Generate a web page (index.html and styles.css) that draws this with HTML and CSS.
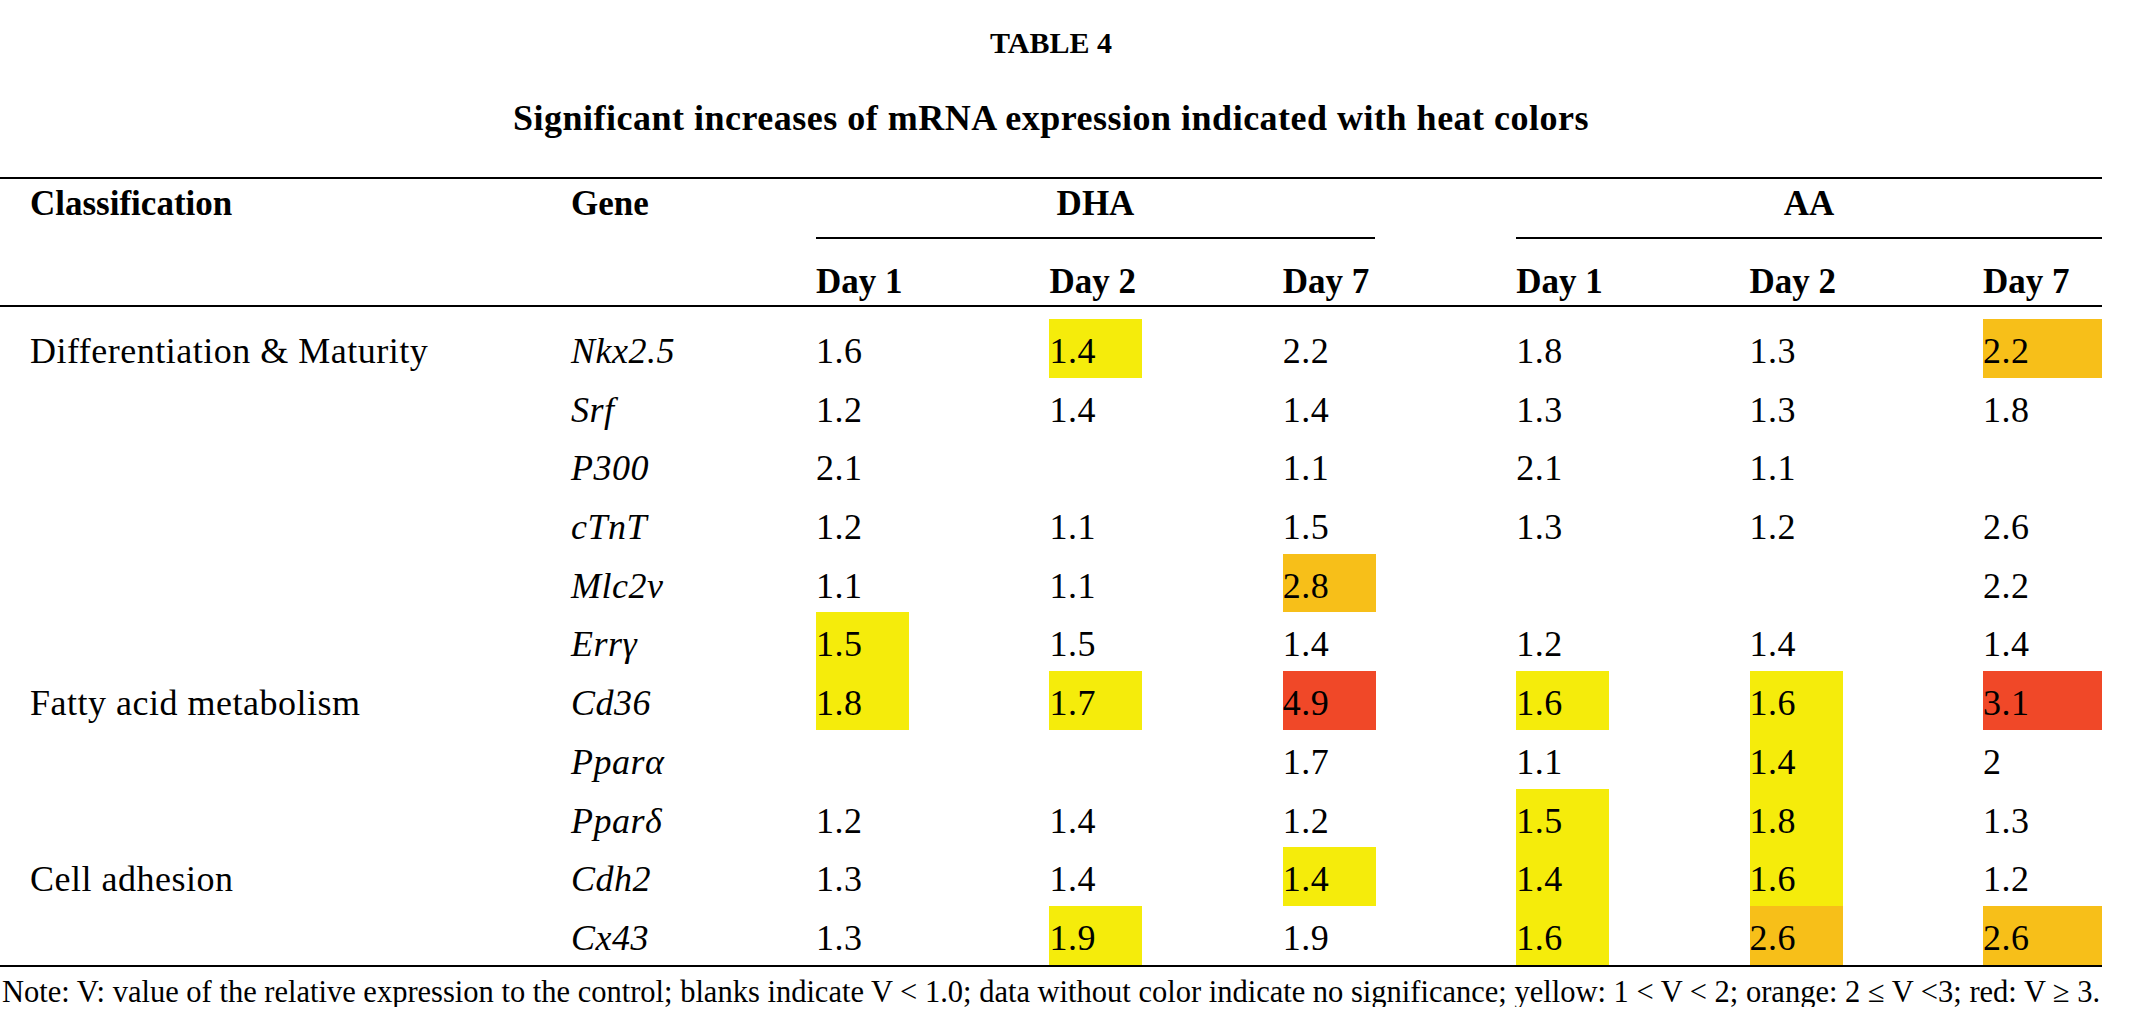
FILE: index.html
```html
<!DOCTYPE html>
<html lang="en">
<head>
<meta charset="utf-8">
<title>Table 4</title>
<link rel="stylesheet" href="styles.css">
</head>
<body>
<div class="page">
  <div class="label">TABLE 4</div>
  <div class="title">Significant increases of mRNA expression indicated with heat colors</div>

  <div class="table">
    <div class="thead">
      <div class="th cls">Classification</div>
      <div class="th gene">Gene</div>
      <div class="grp grp-dha"><div class="grp-in">DHA</div></div>
      <div class="grp grp-aa"><div class="grp-in">AA</div></div>
      <div class="th day c3">Day 1</div>
      <div class="th day c4">Day 2</div>
      <div class="th day c5">Day 7</div>
      <div class="th day c6">Day 1</div>
      <div class="th day c7">Day 2</div>
      <div class="th day c8">Day 7</div>
    </div>

    <div class="tbody">
      <div class="td cls">Differentiation &amp; Maturity</div><div class="td gene">Nkx2.5</div>
      <div class="td"><span class="v">1.6</span></div><div class="td"><span class="v y">1.4</span></div><div class="td"><span class="v">2.2</span></div><div class="td"><span class="v">1.8</span></div><div class="td"><span class="v">1.3</span></div><div class="td last"><span class="v o">2.2</span></div>

      <div class="td cls"></div><div class="td gene">Srf</div>
      <div class="td"><span class="v">1.2</span></div><div class="td"><span class="v">1.4</span></div><div class="td"><span class="v">1.4</span></div><div class="td"><span class="v">1.3</span></div><div class="td"><span class="v">1.3</span></div><div class="td last"><span class="v">1.8</span></div>

      <div class="td cls"></div><div class="td gene">P300</div>
      <div class="td"><span class="v">2.1</span></div><div class="td"><span class="v"></span></div><div class="td"><span class="v">1.1</span></div><div class="td"><span class="v">2.1</span></div><div class="td"><span class="v">1.1</span></div><div class="td last"><span class="v"></span></div>

      <div class="td cls"></div><div class="td gene">cTnT</div>
      <div class="td"><span class="v">1.2</span></div><div class="td"><span class="v">1.1</span></div><div class="td"><span class="v">1.5</span></div><div class="td"><span class="v">1.3</span></div><div class="td"><span class="v">1.2</span></div><div class="td last"><span class="v">2.6</span></div>

      <div class="td cls"></div><div class="td gene">Mlc2v</div>
      <div class="td"><span class="v">1.1</span></div><div class="td"><span class="v">1.1</span></div><div class="td"><span class="v o">2.8</span></div><div class="td"><span class="v"></span></div><div class="td"><span class="v"></span></div><div class="td last"><span class="v">2.2</span></div>

      <div class="td cls"></div><div class="td gene">Errγ</div>
      <div class="td"><span class="v y">1.5</span></div><div class="td"><span class="v">1.5</span></div><div class="td"><span class="v">1.4</span></div><div class="td"><span class="v">1.2</span></div><div class="td"><span class="v">1.4</span></div><div class="td last"><span class="v">1.4</span></div>

      <div class="td cls">Fatty acid metabolism</div><div class="td gene">Cd36</div>
      <div class="td"><span class="v y">1.8</span></div><div class="td"><span class="v y">1.7</span></div><div class="td"><span class="v r">4.9</span></div><div class="td"><span class="v y">1.6</span></div><div class="td"><span class="v y">1.6</span></div><div class="td last"><span class="v r">3.1</span></div>

      <div class="td cls"></div><div class="td gene">Pparα</div>
      <div class="td"><span class="v"></span></div><div class="td"><span class="v"></span></div><div class="td"><span class="v">1.7</span></div><div class="td"><span class="v">1.1</span></div><div class="td"><span class="v y">1.4</span></div><div class="td last"><span class="v">2</span></div>

      <div class="td cls"></div><div class="td gene">Pparδ</div>
      <div class="td"><span class="v">1.2</span></div><div class="td"><span class="v">1.4</span></div><div class="td"><span class="v">1.2</span></div><div class="td"><span class="v y">1.5</span></div><div class="td"><span class="v y">1.8</span></div><div class="td last"><span class="v">1.3</span></div>

      <div class="td cls">Cell adhesion</div><div class="td gene">Cdh2</div>
      <div class="td"><span class="v">1.3</span></div><div class="td"><span class="v">1.4</span></div><div class="td"><span class="v y">1.4</span></div><div class="td"><span class="v y">1.4</span></div><div class="td"><span class="v y">1.6</span></div><div class="td last"><span class="v">1.2</span></div>

      <div class="td cls"></div><div class="td gene">Cx43</div>
      <div class="td"><span class="v">1.3</span></div><div class="td"><span class="v y">1.9</span></div><div class="td"><span class="v">1.9</span></div><div class="td"><span class="v y">1.6</span></div><div class="td"><span class="v o">2.6</span></div><div class="td last"><span class="v o">2.6</span></div>
    </div>
  </div>

  <div class="note">Note: V: value of the relative expression to the control; blanks indicate V &lt; 1.0; data without color indicate no significance; yellow: 1 &lt; V &lt; 2; orange: 2 ≤ V &lt;3; red: V ≥ 3.</div>
</div>
</body>
</html>
```

FILE: styles.css
```css
html, body {
  margin: 0;
  padding: 0;
  background: #ffffff;
}

body {
  font-family: "Liberation Serif", "Times New Roman", serif;
  color: #000000;
}

.page {
  width: 2102px;
}

.label {
  font-weight: bold;
  font-size: 30px;
  line-height: 30px;
  text-align: center;
  margin-top: 28px;
}

.title {
  font-weight: bold;
  font-size: 36px;
  line-height: 35px;
  letter-spacing: 0.5px;
  text-align: center;
  margin-top: 43px;
}

.table {
  margin-top: 41px;
  border-top: 2px solid #000;
  --cols: 571px 245px 233.4px 233.4px 233.4px 233.4px 233.4px 119px;
}

.thead {
  display: grid;
  grid-template-columns: var(--cols);
  grid-template-rows: 60px 66px;
  border-bottom: 2px solid #000;
  font-size: 35px;
  line-height: 35px;
  font-weight: bold;
}

.th {
  padding-top: 7px;
  box-sizing: border-box;
}

.th.cls {
  grid-column: 1;
  grid-row: 1;
  padding-left: 30px;
}

.th.gene {
  grid-column: 2;
  grid-row: 1;
}

.grp {
  grid-row: 1;
}

.grp-dha {
  grid-column: 3 / 6;
}

.grp-aa {
  grid-column: 6 / 9;
}

.grp-in {
  height: 60px;
  box-sizing: border-box;
  padding-top: 7px;
  border-bottom: 2px solid #000;
  text-align: center;
}

.grp-dha .grp-in {
  width: 559px;
}

.th.day {
  grid-row: 2;
  padding-top: 25px;
}

.c3 { grid-column: 3; }
.c4 { grid-column: 4; }
.c5 { grid-column: 5; }
.c6 { grid-column: 6; }
.c7 { grid-column: 7; }
.c8 { grid-column: 8; }

.tbody {
  display: grid;
  grid-template-columns: var(--cols);
  grid-auto-rows: 58.7px;
  padding-top: 12px;
  border-bottom: 2px solid #000;
  font-size: 36px;
  line-height: 35px;
  letter-spacing: 0.5px;
}

.td {
  box-sizing: border-box;
  height: 58.7px;
}

.td.cls,
.td.gene {
  padding-top: 15px;
}

.td.cls {
  padding-left: 30px;
  white-space: nowrap;
}

.td.gene {
  font-style: italic;
}

.v {
  display: block;
  width: 93px;
  height: 100%;
  box-sizing: border-box;
  padding-top: 15px;
}

.last .v {
  width: 100%;
}

.v.y { background: #f5ec0b; }
.v.o { background: #f7bf19; }
.v.r { background: #f04828; }

.note {
  font-size: 30.5px;
  line-height: 30px;
  margin-top: 10px;
  padding-left: 2px;
  white-space: nowrap;
}
```
